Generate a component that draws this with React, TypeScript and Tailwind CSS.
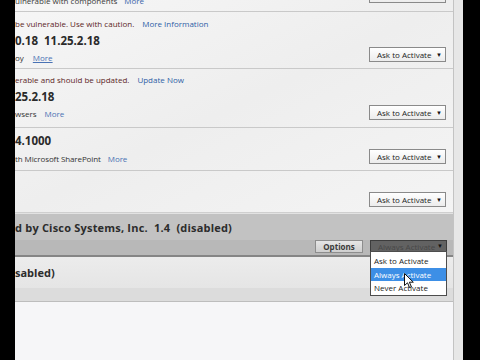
import React from 'react';

const AskButton: React.FC<{ className?: string }> = ({ className = '' }) => (
  <div
    className={`w-[77px] h-[15px] border border-[#8a8a8a] bg-linear-to-b from-white to-[#ececec] flex items-center justify-between pl-[7px] pr-[3px] text-[8px] leading-none text-[#222] ${className}`}
  >
    <span>Ask to Activate</span>
    <span className="text-[6px] text-[#111]">▼</span>
  </div>
);

const Cursor: React.FC = () => (
  <svg className="absolute left-[389px] top-[273px]" width="11" height="16" viewBox="0 0 11 16">
    <path d="M0.5 0.5 L0.5 12.5 L3.5 9.8 L5.6 14.6 L7.4 13.8 L5.4 9.2 L9.3 9.2 Z" fill="#fff" stroke="#111" strokeWidth="1" strokeLinejoin="round" />
  </svg>
);

const App: React.FC = () => {
  return (
    <div className="w-[480px] h-[360px] bg-black flex overflow-hidden font-['Open_Sans',sans-serif]">
      <div className="w-[15px] shrink-0" />

      <div className="w-[438px] shrink-0 flex flex-col relative">
        {/* plugin list */}
        <div className="h-[213px] flex flex-col bg-linear-to-br from-[#f6f6f6] via-[#eeeeee] to-[#f4f4f4] border-b border-[#cfcfcf]">
          {/* row 0, scrolled off the top */}
          <div className="h-[12px] flex justify-between border-b border-[#c9c9c9] overflow-hidden">
            <div className="flex gap-[7px] text-[8px] leading-none -mt-[3px]">
              <span className="text-[#3a3a3a]">ulnerable with components</span>
              <span className="text-[#3b66aa]">More</span>
            </div>
            <AskButton className="-mt-[12px] mr-[7px]" />
          </div>

          {/* row 1 */}
          <div className="h-[57px] flex justify-between items-end border-b border-[#c9c9c9]">
            <div className="flex flex-col pt-[3px] self-start">
              <div className="h-[17px] flex items-center gap-[8px] text-[8px]">
                <span className="text-[#5c2626]">be vulnerable. Use with caution.</span>
                <span className="text-[#2f5ea6]">More Information</span>
              </div>
              <div className="h-[17px] flex items-center text-[11.5px] font-bold text-[#2a2a2a] whitespace-pre">0.18  11.25.2.18</div>
              <div className="h-[17px] flex items-center gap-[9px] text-[8px]">
                <span className="text-[#333]">oy</span>
                <span className="text-[#4a72b4] underline">More</span>
              </div>
            </div>
            <AskButton className="mb-[6px] mr-[7px]" />
          </div>

          {/* row 2 */}
          <div className="h-[59px] flex justify-between items-end border-b border-[#c9c9c9]">
            <div className="flex flex-col pt-[2px] self-start">
              <div className="h-[17px] flex items-center gap-[8px] text-[8px]">
                <span className="text-[#5c2626]">erable and should be updated.</span>
                <span className="text-[#2f5ea6]">Update Now</span>
              </div>
              <div className="h-[17px] flex items-center text-[11.5px] font-bold text-[#2a2a2a]">25.2.18</div>
              <div className="h-[18px] flex items-center gap-[8px] text-[8px]">
                <span className="text-[#333]">wsers</span>
                <span className="text-[#4a72b4]">More</span>
              </div>
            </div>
            <AskButton className="mb-[7px] mr-[7px]" />
          </div>

          {/* row 3 */}
          <div className="h-[43px] flex justify-between items-end border-b border-[#c9c9c9]">
            <div className="flex flex-col pt-[4px] self-start">
              <div className="h-[18px] flex items-center text-[11.5px] font-bold text-[#2a2a2a]">4.1000</div>
              <div className="h-[17px] flex items-center gap-[7px] text-[8px] tracking-[-0.1px]">
                <span className="text-[#333]">th Microsoft SharePoint</span>
                <span className="text-[#4a72b4]">More</span>
              </div>
            </div>
            <AskButton className="mb-[6px] mr-[7px]" />
          </div>

          {/* row 4 */}
          <div className="flex-1 flex justify-end items-end">
            <AskButton className="mb-[5px] mr-[7px]" />
          </div>
        </div>

        {/* disabled plugin header */}
        <div className="h-[44px] flex flex-col bg-[#c2c2c2] border-b-2 border-[#858585]">
          <div className="h-[27px] flex items-center pt-[3px] border-t border-[#e2e2e2]">
            <span className="text-[11px] font-bold text-[#2c2c2c] whitespace-pre tracking-[0.2px]">d by Cisco Systems, Inc.  1.4  (disabled)</span>
          </div>
          <div className="flex-1 flex justify-end items-start gap-[7px] pr-[6px] bg-[#b8b8b8]">
            <div className="w-[48px] h-[13px] border border-[#8d8d8d] bg-linear-to-b from-[#e6e6e6] to-[#cfcfcf] flex items-center justify-center text-[8px] font-bold text-[#3a3a3a]">
              Options
            </div>
            <div className="w-[77px] h-[13px] border border-[#3c3c3c] bg-[#626262] flex items-center justify-between pl-[7px] pr-[3px] text-[8px] text-[#484848]">
              <span>Always Activate</span>
              <span className="text-[6px] text-[#111]">▼</span>
            </div>
          </div>
        </div>

        {/* second disabled plugin */}
        <div className="h-[45px] flex flex-col bg-linear-to-b from-[#ececec] to-[#e2e2e2] border-b border-[#bdbdbd]">
          <div className="h-[31px] flex items-center pt-[2px]">
            <span className="text-[11px] font-bold text-[#2c2c2c]">sabled)</span>
          </div>
          <div className="flex-1 bg-[#dcdcdc]" />
        </div>

        <div className="flex-1 bg-[#f6f6f8]" />

        {/* open dropdown menu */}
        <div className="absolute left-[355px] top-[251px] w-[77px] h-[45px] bg-white border border-[#4d4d4d] flex flex-col pt-[2px] text-[8px] text-[#222]">
          <div className="h-[14px] flex items-center pl-[3px]">Ask to Activate</div>
          <div className="h-[13px] flex items-center pl-[3px] bg-[#3d8fe6] text-white">Always Activate</div>
          <div className="h-[13px] flex items-center pl-[3px]">Never Activate</div>
        </div>

        <Cursor />
      </div>

      <div className="w-[10px] shrink-0 bg-[#e7e7e7] border-l border-[#c3c3c3]" />
    </div>
  );
};

export default App;
